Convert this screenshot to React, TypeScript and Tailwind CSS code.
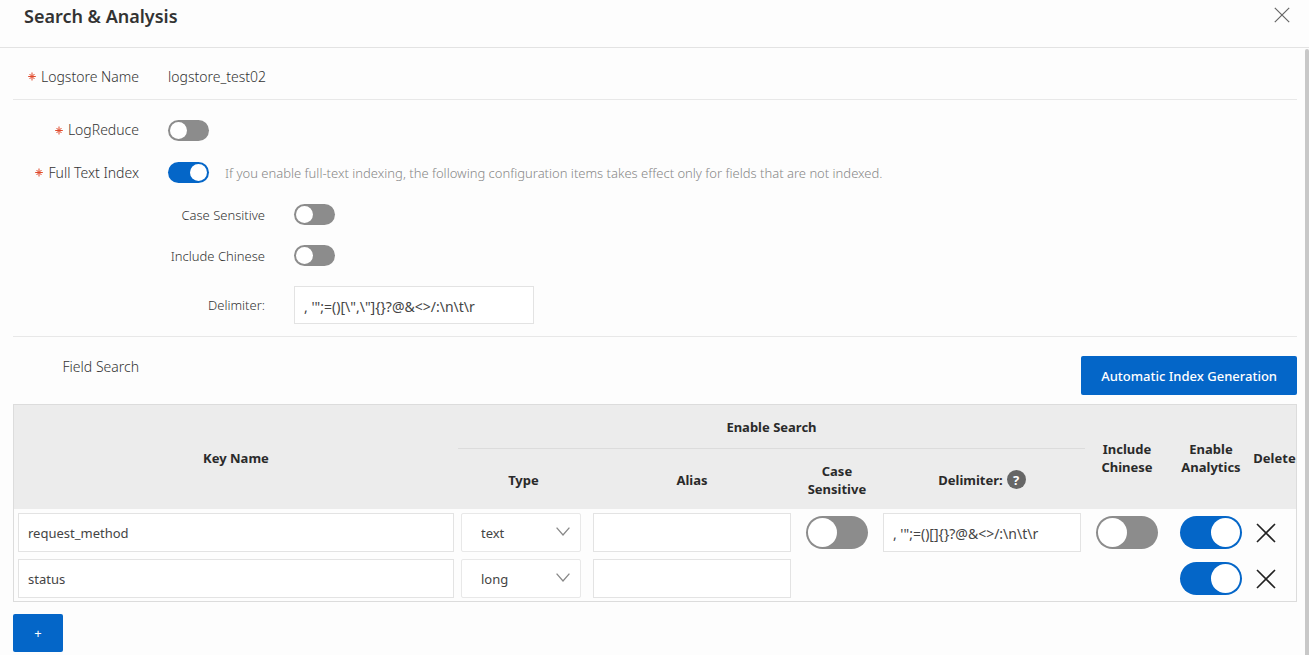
import { useState } from 'react'
import type { ReactNode } from 'react'

type FieldRow = {
  id: number
  key: string
  type: string
  alias: string
  caseSensitive: boolean
  delimiter: string
  chinese: boolean
  analytics: boolean
}

const TYPES = ['text', 'long', 'double', 'json']
const DEFAULT_DELIMITER = `, '";=()[]{}?@&<>/:\\n\\t\\r`

const INITIAL_ROWS: FieldRow[] = [
  { id: 1, key: 'request_method', type: 'text', alias: '', caseSensitive: false, delimiter: DEFAULT_DELIMITER, chinese: false, analytics: true },
  { id: 2, key: 'status', type: 'long', alias: '', caseSensitive: false, delimiter: DEFAULT_DELIMITER, chinese: false, analytics: true },
]

const INPUT = 'block w-full border border-[#e3e3e3] bg-white px-[9px] pt-0.5 text-[#444] outline-none focus:border-[#0466c8]'

function Switch({ id, label, checked, onChange, large }: {
  id?: string
  label?: string
  checked: boolean
  onChange: (v: boolean) => void
  large?: boolean
}) {
  return (
    <input
      id={id}
      type="checkbox"
      role="switch"
      aria-label={label}
      checked={checked}
      onChange={e => onChange(e.target.checked)}
      className={`block shrink-0 cursor-pointer appearance-none rounded-full bg-[#8c8c8c] checked:bg-[#0466c8] before:block before:rounded-full before:bg-white
        ${large
          ? 'h-[33px] w-[62px] p-[2px] before:size-[29px] checked:before:ml-[29px]'
          : 'h-[21px] w-[41px] p-[2px] before:size-[17px] checked:before:ml-[20px]'}`}
    />
  )
}

function Cross({ size, width }: { size: number; width: number }) {
  return (
    <svg width={size} height={size} viewBox="0 0 20 20" fill="none" stroke="currentColor" strokeWidth={width} aria-hidden="true">
      <path d="M1 1L19 19M19 1L1 19" />
    </svg>
  )
}

function Star() {
  return (
    <svg width="8" height="9" viewBox="0 0 8 9" fill="none" stroke="#e0492b" className="mr-[5px] shrink-0" aria-hidden="true">
      <path d="M4 0.5V8.5M0.2 4.5H7.8M1.5 2L6.5 7M6.5 2L1.5 7" />
    </svg>
  )
}

function Label({ htmlFor, required, children }: { htmlFor?: string; required?: boolean; children: ReactNode }) {
  return (
    <label htmlFor={htmlFor} className="flex w-[126px] shrink-0 items-center justify-end text-sm font-light whitespace-nowrap text-[#333]">
      {required && <Star />}
      {children}
    </label>
  )
}

function SubLabel({ htmlFor, children }: { htmlFor: string; children: ReactNode }) {
  return (
    <label htmlFor={htmlFor} className="w-[252px] shrink-0 pt-0.5 text-right text-[13px] font-light text-[#333]">{children}</label>
  )
}

export default function App() {
  const [logReduce, setLogReduce] = useState(false)
  const [fullText, setFullText] = useState(true)
  const [caseSensitive, setCaseSensitive] = useState(false)
  const [chinese, setChinese] = useState(false)
  const [delimiter, setDelimiter] = useState(`, '";=()[\\",\\"]{}?@&<>/:\\n\\t\\r`)
  const [rows, setRows] = useState(INITIAL_ROWS)

  function update(id: number, patch: Partial<FieldRow>) {
    setRows(rows.map(r => (r.id === id ? { ...r, ...patch } : r)))
  }

  function addRow() {
    const id = Math.max(0, ...rows.map(r => r.id)) + 1
    setRows([...rows, { id, key: '', type: 'text', alias: '', caseSensitive: false, delimiter: DEFAULT_DELIMITER, chinese: false, analytics: true }])
  }

  return (
    <div className="flex h-screen flex-col overflow-hidden bg-[#fdfdfd] font-['Noto_Sans','Open_Sans',sans-serif] text-[#333]">
      <header className="flex h-12 shrink-0 items-start justify-between border-b border-[#e3e3e3] pt-1 pr-[18px] pl-6">
        <h1 className="text-lg leading-6 font-semibold">Search &amp; Analysis</h1>
        <button type="button" aria-label="Close" className="mt-0.5 flex size-[18px] items-center justify-center text-[#666]">
          <Cross size={16} width={1.5} />
        </button>
      </header>

      <div className="flex min-h-0 flex-1">
        <main className="min-w-0 flex-1 pr-2 pl-[13px]">
          <section className="flex h-[52px] items-center gap-[29px] border-b border-[#e8e8e8] pt-1.5">
            <Label required>Logstore Name</Label>
            <span className="text-sm font-light">logstore_test02</span>
          </section>

          <section className="border-b border-[#e8e8e8] pt-[9px] pb-3">
            <div className="flex h-[42px] items-center gap-[29px]">
              <Label htmlFor="log-reduce" required>LogReduce</Label>
              <Switch id="log-reduce" checked={logReduce} onChange={setLogReduce} />
            </div>
            <div className="flex h-[43px] items-center gap-[29px]">
              <Label htmlFor="full-text" required>Full Text Index</Label>
              <div className="flex items-center gap-4">
                <Switch id="full-text" checked={fullText} onChange={setFullText} />
                <p className="pt-0.5 text-[13px] font-light text-[#888]">
                  If you enable full-text indexing, the following configuration items takes effect only for fields that are not indexed.
                </p>
              </div>
            </div>
            <div className="flex h-[41px] items-center gap-[29px]">
              <SubLabel htmlFor="case-sensitive">Case Sensitive</SubLabel>
              <Switch id="case-sensitive" checked={caseSensitive} onChange={setCaseSensitive} />
            </div>
            <div className="flex h-[41px] items-center gap-[29px]">
              <SubLabel htmlFor="include-chinese">Include Chinese</SubLabel>
              <Switch id="include-chinese" checked={chinese} onChange={setChinese} />
            </div>
            <div className="mt-[10px] flex items-center gap-[29px]">
              <SubLabel htmlFor="delimiter">Delimiter:</SubLabel>
              <div className="w-60">
                <input id="delimiter" value={delimiter} onChange={e => setDelimiter(e.target.value)} className={`${INPUT} h-[38px] text-sm`} />
              </div>
            </div>
          </section>

          <section>
            <div className="flex items-start justify-between pt-[19px] pb-[9px]">
              <h2 className="w-[126px] pt-px text-right text-sm font-light">Field Search</h2>
              <button type="button" className="h-[39px] rounded-xs bg-[#0466c8] px-5 pt-0.5 text-[13px] font-medium text-white">Automatic Index Generation</button>
            </div>

            <div className="border border-[#dcdcdc]">
              <table className="w-full table-fixed border-collapse text-[13px]">
                <colgroup>
                  <col />
                  <col className="w-[131px]" />
                  <col className="w-[206px]" />
                  <col className="w-[84px]" />
                  <col className="w-[206px]" />
                  <col className="w-[84px]" />
                  <col className="w-[84px]" />
                  <col className="w-[43px]" />
                </colgroup>
                <thead className="bg-[#ececec] leading-[18px] text-[#2a2a2a] [&_th]:pt-0.5">
                  <tr className="h-[43px]">
                    <th rowSpan={2}>Key Name</th>
                    <th colSpan={4} className="border-b border-[#dcdcdc]">Enable Search</th>
                    <th rowSpan={2}>Include Chinese</th>
                    <th rowSpan={2}>Enable Analytics</th>
                    <th rowSpan={2}>Delete</th>
                  </tr>
                  <tr className="h-[61px]">
                    <th>Type</th>
                    <th>Alias</th>
                    <th>Case Sensitive</th>
                    <th>
                      <span className="inline-flex items-center gap-1">
                        Delimiter:
                        <span className="flex size-[19px] items-center justify-center rounded-full bg-[#666] text-[13px] text-white">?</span>
                      </span>
                    </th>
                  </tr>
                </thead>
                <tbody>
                  {rows.map(row => (
                    <tr key={row.id} className="h-[46px]">
                      <td className="px-1">
                        <input aria-label="Key Name" value={row.key} onChange={e => update(row.id, { key: e.target.value })} className={`${INPUT} h-[39px] text-[13px]`} />
                      </td>
                      <td className="pr-2 pl-[3px]">
                        <div className="relative">
                          <select aria-label="Type" value={row.type} onChange={e => update(row.id, { type: e.target.value })}
                            className="block h-[39px] w-full appearance-none rounded-xs border border-[#e8e8e8] bg-white pt-1 pl-[19px] text-[13px] text-[#444]">
                            {TYPES.map(t => <option key={t}>{t}</option>)}
                          </select>
                          <svg width="14" height="9" viewBox="0 0 14 9" fill="none" stroke="#888" strokeWidth="1.3" className="pointer-events-none absolute top-[14px] right-[11px]" aria-hidden="true">
                            <path d="M0.6 0.6L7 8L13.4 0.6" />
                          </svg>
                        </div>
                      </td>
                      <td className="px-1">
                        <input aria-label="Alias" value={row.alias} onChange={e => update(row.id, { alias: e.target.value })} className={`${INPUT} h-[39px] text-[13px]`} />
                      </td>
                      <td className="px-[11px]">
                        {row.type === 'text' && <Switch large label="Case Sensitive" checked={row.caseSensitive} onChange={v => update(row.id, { caseSensitive: v })} />}
                      </td>
                      <td className="px-1">
                        {row.type === 'text' && (
                          <input aria-label="Delimiter" value={row.delimiter} onChange={e => update(row.id, { delimiter: e.target.value })} className={`${INPUT} h-[39px] text-sm`} />
                        )}
                      </td>
                      <td className="px-[11px]">
                        {row.type === 'text' && <Switch large label="Include Chinese" checked={row.chinese} onChange={v => update(row.id, { chinese: v })} />}
                      </td>
                      <td className="px-[11px]">
                        <Switch large label="Enable Analytics" checked={row.analytics} onChange={v => update(row.id, { analytics: v })} />
                      </td>
                      <td className="pl-[3px]">
                        <button type="button" aria-label="Delete" onClick={() => setRows(rows.filter(r => r.id !== row.id))} className="block pt-px text-[#222]">
                          <Cross size={20} width={1.6} />
                        </button>
                      </td>
                    </tr>
                  ))}
                </tbody>
              </table>
            </div>

            <button type="button" aria-label="Add field" onClick={addRow} className="mt-3 h-[38px] w-[50px] rounded-xs bg-[#0466c8] pt-0.5 text-[13px] text-white">+</button>
          </section>
        </main>
        <div className="mt-px w-1 shrink-0 rounded-t-xs bg-[#c8c8c8]" />
      </div>
    </div>
  )
}
